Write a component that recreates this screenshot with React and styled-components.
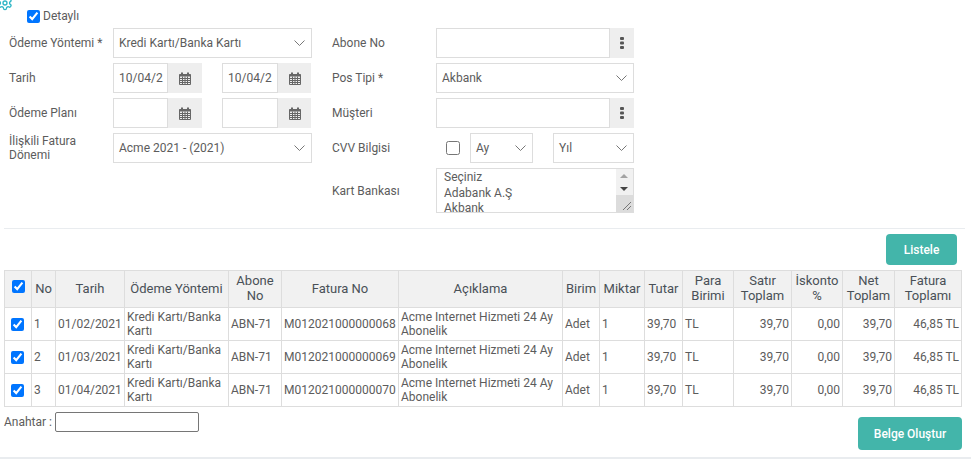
import React from "react";
import styled, { createGlobalStyle } from "styled-components";
import { LuSettings } from "react-icons/lu";

const GlobalStyle = createGlobalStyle`
  html, body {
    margin: 0;
    padding: 0;
    background: #fff;
  }
  body {
    font-family: Roboto, "Liberation Sans", sans-serif;
    font-size: 12px;
    color: #5c5c5c;
  }
  * {
    box-sizing: border-box;
  }
`;

const colors = {
  border: "#dddddd",
  addon: "#eeeeee",
  head: "#f1f1f1",
  teal: "#43b5aa",
  headText: "#495057",
};

const Page = styled.div`
  position: relative;
  width: 971px;
  height: 459px;
  overflow: hidden;
  padding: 9px 0 0;
`;

const GearIcon = styled(LuSettings)`
  position: absolute;
  left: -3px;
  top: -5px;
  width: 16px;
  height: 16px;
  color: #2fb6c6;
  stroke-width: 2;
`;

const DetailRow = styled.label`
  display: flex;
  align-items: center;
  gap: 3px;
  height: 14px;
  margin-left: 27px;
  margin-bottom: 5px;
`;

const Check = styled.input.attrs({ type: "checkbox" })`
  width: 13px;
  height: 13px;
  margin: 0;
  accent-color: #0075ff;
`;

const FormGrid = styled.div`
  display: grid;
  grid-template-columns: 303px 302px;
  column-gap: 20px;
  padding-left: 9px;
`;

const FormColumn = styled.div`
  display: flex;
  flex-direction: column;
  gap: 5px;
`;

const Row = styled.div`
  display: flex;
  align-items: center;
  height: ${(p) => p.$height || 30}px;
`;

const Label = styled.div`
  width: 104px;
  flex: none;
  line-height: 14px;
`;

const SelectBox = styled.div`
  display: flex;
  align-items: center;
  justify-content: space-between;
  width: ${(p) => p.$width || 199}px;
  height: 30px;
  padding: 0 6px 0 5px;
  border: 1px solid ${colors.border};
  background: #fff;
`;

const ChevronIcon = styled.svg`
  width: 11px;
  height: 6px;
  fill: none;
  stroke: #777;
  stroke-width: 1;
`;

const DatePair = styled.div`
  display: flex;
  gap: 20px;
`;

const InputGroup = styled.div`
  display: flex;
  height: 30px;
  width: ${(p) => p.$width}px;
`;

const GroupInput = styled.div`
  flex: 1;
  min-width: 0;
  padding-left: 5px;
  line-height: 28px;
  overflow: hidden;
  white-space: nowrap;
  border: 1px solid ${colors.border};
`;

const Addon = styled.div`
  display: flex;
  align-items: center;
  justify-content: center;
  flex: none;
  width: ${(p) => p.$width}px;
  background: ${colors.addon};
`;

const CalendarIcon = styled.svg`
  width: 12px;
  height: 13px;
  fill: none;
  stroke: #666;
  stroke-width: 1;
`;

const DotsIcon = styled.svg`
  width: 4px;
  height: 12px;
  fill: #555;
`;

const CvvControls = styled.div`
  display: flex;
  align-items: center;
  gap: 10px;
  padding-left: 10px;
`;

const CvvCheck = styled(Check)`
  width: 14px;
  height: 14px;
`;

const CvvYear = styled(SelectBox)`
  margin-left: 10px;
`;

const ListBox = styled.div`
  position: relative;
  width: 198px;
  height: 45px;
  overflow: hidden;
  border: 1px solid ${colors.border};
  padding: 1px 0 0 7px;
  line-height: 15.5px;
`;

const ListScroll = styled.div`
  position: absolute;
  top: 0;
  right: 0;
  bottom: 0;
  width: 17px;
  background: #f1f1f1;
`;

const ScrollArrow = styled.svg`
  position: absolute;
  left: 4px;
  top: ${(p) => p.$top}px;
  width: 8px;
  height: 4px;
  fill: ${(p) => p.$fill};
`;

const Grip = styled.svg`
  position: absolute;
  right: 0;
  bottom: 0;
  width: 17px;
  height: 17px;
  background: #dcdcdc;
`;

const Divider = styled.hr`
  margin: 15px 6px 0 4px;
  border: 0;
  border-top: 1px solid #e9ecef;
`;

const Actions = styled.div`
  display: flex;
  justify-content: flex-end;
  padding: 5px 14px 0 0;
`;

const TealButton = styled.div`
  display: flex;
  align-items: center;
  justify-content: center;
  width: ${(p) => p.$width}px;
  height: ${(p) => p.$height}px;
  border-radius: 4px;
  background: ${colors.teal};
  color: #fff;
  font-weight: 500;
`;

const Table = styled.table`
  width: 957px;
  margin: 5px 0 0 4px;
  table-layout: fixed;
  border-collapse: collapse;
  line-height: 14px;
`;

const Col = styled.col`
  width: ${(p) => p.$width}px;
`;

const Th = styled.th`
  height: 37px;
  padding: 0 1px 2px;
  border: 1px solid ${colors.border};
  background: ${colors.head};
  color: ${colors.headText};
  font-weight: 400;
  font-size: 13px;
  line-height: 15px;
  text-align: center;
`;

const Td = styled.td`
  height: 33px;
  padding: 0 2px;
  border: 1px solid ${colors.border};
  text-align: ${(p) => (p.$right ? "right" : "left")};
  overflow: hidden;
`;

const CheckCell = styled(Td)`
  padding: 0 0 0 6px;
`;

const TableCheck = styled(Check)`
  display: block;
`;

const FooterRow = styled.div`
  display: flex;
  justify-content: space-between;
  padding: 5px 9px 0 4px;
`;

const KeyField = styled.div`
  display: flex;
  align-items: center;
  gap: 3px;
  height: 20px;
`;

const KeyInput = styled.div`
  width: 144px;
  height: 20px;
  border: 1px solid #767676;
  border-radius: 2px;
`;

const FooterButton = styled(TealButton)`
  margin-top: 5px;
`;

const BottomLine = styled.div`
  position: absolute;
  left: 0;
  right: 0;
  bottom: 0;
  height: 2px;
  background: #e9ecef;
`;

const columns = [27, 24, 69, 104, 53, 117, 164, 37, 45, 38, 51, 58, 51, 52, 67];

const headers = [
  "No",
  "Tarih",
  "Ödeme Yöntemi",
  "Abone No",
  "Fatura No",
  "Açıklama",
  "Birim",
  "Miktar",
  "Tutar",
  "Para Birimi",
  "Satır Toplam",
  "İskonto %",
  "Net Toplam",
  "Fatura Toplamı",
];

const rows = [
  { no: 1, date: "01/02/2021", invoice: "M012021000000068" },
  { no: 2, date: "01/03/2021", invoice: "M012021000000069" },
  { no: 3, date: "01/04/2021", invoice: "M012021000000070" },
];

const Chevron = () => (
  <ChevronIcon viewBox="0 0 11 6">
    <path d="M.5.5l5 5 5-5" />
  </ChevronIcon>
);

const Calendar = () => (
  <CalendarIcon viewBox="0 0 12 13">
    <path d="M.5 2.5h11v10H.5zM.5 6.5h11M.5 8.5h11M.5 10.5h11M3.5 4.5v8M6 4.5v8M8.5 4.5v8" />
    <path d="M.5 3.5h11M3 .5v3M9 .5v3" strokeWidth="2" />
  </CalendarIcon>
);

const Select = ({ value, width }) => (
  <SelectBox $width={width}>
    {value}
    <Chevron />
  </SelectBox>
);

const DateInput = ({ value, width, addon }) => (
  <InputGroup $width={width}>
    <GroupInput>{value}</GroupInput>
    <Addon $width={addon}>
      <Calendar />
    </Addon>
  </InputGroup>
);

const LookupInput = () => (
  <InputGroup $width={198}>
    <GroupInput />
    <Addon $width={24}>
      <DotsIcon viewBox="0 0 4 12">
        <rect y="0" width="4" height="3" rx="1" />
        <rect y="4.5" width="4" height="3" rx="1" />
        <rect y="9" width="4" height="3" rx="1" />
      </DotsIcon>
    </Addon>
  </InputGroup>
);

const DateRange = ({ value }) => (
  <DatePair>
    <DateInput value={value} width={89} addon={34} />
    <DateInput value={value} width={89} addon={33} />
  </DatePair>
);

export default function App() {
  return (
    <Page>
      <GlobalStyle />
      <GearIcon />
      <DetailRow>
        <Check defaultChecked />
        Detaylı
      </DetailRow>

      <FormGrid>
        <FormColumn>
          <Row>
            <Label>Ödeme Yöntemi *</Label>
            <Select value="Kredi Kartı/Banka Kartı" />
          </Row>
          <Row>
            <Label>Tarih</Label>
            <DateRange value="10/04/2" />
          </Row>
          <Row>
            <Label>Ödeme Planı</Label>
            <DateRange />
          </Row>
          <Row>
            <Label>
              İlişkili Fatura
              <br />
              Dönemi
            </Label>
            <Select value="Acme 2021 - (2021)" />
          </Row>
        </FormColumn>

        <FormColumn>
          <Row>
            <Label>Abone No</Label>
            <LookupInput />
          </Row>
          <Row>
            <Label>Pos Tipi *</Label>
            <Select value="Akbank" width={198} />
          </Row>
          <Row>
            <Label>Müşteri</Label>
            <LookupInput />
          </Row>
          <Row>
            <Label>CVV Bilgisi</Label>
            <CvvControls>
              <CvvCheck />
              <Select value="Ay" width={63} />
              <CvvYear $width={81}>
                Yıl
                <Chevron />
              </CvvYear>
            </CvvControls>
          </Row>
          <Row $height={45}>
            <Label>Kart Bankası</Label>
            <ListBox>
              Seçiniz
              <br />
              Adabank A.Ş
              <br />
              Akbank
              <ListScroll>
                <ScrollArrow $top={5} $fill="#a3a3a3" viewBox="0 0 8 4">
                  <path d="M4 0 8 4H0z" />
                </ScrollArrow>
                <ScrollArrow $top={18} $fill="#444" viewBox="0 0 8 4">
                  <path d="M0 0h8L4 4z" />
                </ScrollArrow>
                <Grip viewBox="0 0 17 17">
                  <path d="M15 7 7 15M15 11l-4 4" stroke="#777" fill="none" />
                </Grip>
              </ListScroll>
            </ListBox>
          </Row>
        </FormColumn>
      </FormGrid>

      <Divider />

      <Actions>
        <TealButton $width={71} $height={31}>
          Listele
        </TealButton>
      </Actions>

      <Table>
        <colgroup>
          {columns.map((width, i) => (
            <Col key={i} $width={width} />
          ))}
        </colgroup>
        <thead>
          <tr>
            <Th>
              <Check defaultChecked />
            </Th>
            {headers.map((title) => (
              <Th key={title}>{title}</Th>
            ))}
          </tr>
        </thead>
        <tbody>
          {rows.map((row) => (
            <tr key={row.no}>
              <CheckCell>
                <TableCheck defaultChecked />
              </CheckCell>
              <Td>{row.no}</Td>
              <Td>{row.date}</Td>
              <Td>Kredi Kartı/Banka Kartı</Td>
              <Td>ABN-71</Td>
              <Td>{row.invoice}</Td>
              <Td>Acme Internet Hizmeti 24 Ay Abonelik</Td>
              <Td>Adet</Td>
              <Td>1</Td>
              <Td>39,70</Td>
              <Td>TL</Td>
              <Td $right>39,70</Td>
              <Td $right>0,00</Td>
              <Td $right>39,70</Td>
              <Td $right>46,85 TL</Td>
            </tr>
          ))}
        </tbody>
      </Table>

      <FooterRow>
        <KeyField>
          Anahtar :
          <KeyInput />
        </KeyField>
        <FooterButton $width={104} $height={33}>
          Belge Oluştur
        </FooterButton>
      </FooterRow>

      <BottomLine />
    </Page>
  );
}
